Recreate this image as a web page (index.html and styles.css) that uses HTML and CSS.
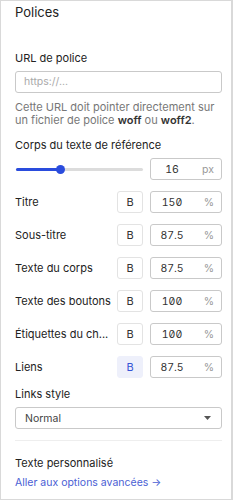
FILE: index.html
```html
<!DOCTYPE html>
<html>
<head>
    <meta charset="utf-8">
    <title>Polices</title>
    <link rel="stylesheet" href="styles.css">
</head>
<body>
    <div class="panel">
        <h2>Polices</h2>

        <div class="field url-field">
            <div class="label">URL de police</div>
            <div class="text-input">https://...</div>
            <div class="help">Cette URL doit pointer directement sur un fichier de police <b>woff</b> ou <b>woff2</b>.</div>
        </div>

        <div class="field base-field">
            <div class="label">Corps du texte de référence</div>
            <div class="row">
                <div class="slider">
                    <div class="track"></div>
                    <div class="fill"></div>
                    <div class="thumb"></div>
                </div>
                <div class="value"><span class="num">16</span><span class="unit">px</span></div>
            </div>
        </div>

        <div class="row size-row">
            <div class="row-label">Titre</div>
            <div class="bold-btn">B</div>
            <div class="value"><span class="num">150</span><span class="unit">%</span></div>
        </div>
        <div class="row size-row">
            <div class="row-label">Sous-titre</div>
            <div class="bold-btn">B</div>
            <div class="value"><span class="num">87.5</span><span class="unit">%</span></div>
        </div>
        <div class="row size-row">
            <div class="row-label">Texte du corps</div>
            <div class="bold-btn">B</div>
            <div class="value"><span class="num">87.5</span><span class="unit">%</span></div>
        </div>
        <div class="row size-row">
            <div class="row-label">Texte des boutons</div>
            <div class="bold-btn">B</div>
            <div class="value"><span class="num">100</span><span class="unit">%</span></div>
        </div>
        <div class="row size-row">
            <div class="row-label">Étiquettes du ch...</div>
            <div class="bold-btn">B</div>
            <div class="value"><span class="num">100</span><span class="unit">%</span></div>
        </div>
        <div class="row size-row">
            <div class="row-label">Liens</div>
            <div class="bold-btn active">B</div>
            <div class="value"><span class="num">87.5</span><span class="unit">%</span></div>
        </div>

        <div class="field links-field">
            <div class="label">Links style</div>
            <div class="select">
                <span>Normal</span>
                <svg width="7" height="4" viewBox="0 0 7 4"><path d="M0 0h7L3.5 4z" fill="#555"/></svg>
            </div>
        </div>

        <hr class="divider">

        <div class="label custom">Texte personnalisé</div>
        <a class="advanced" href="#">Aller aux options avancées →</a>
    </div>
</body>
</html>
```

FILE: styles.css
```css
html, body {
    margin: 0;
    padding: 0;
}

body {
    font-family: Inter, "Noto Sans", sans-serif;
    color: #222;
    background: #fff;
}

.panel {
    box-sizing: border-box;
    width: 233px;
    height: 500px;
    border: 1px solid #d9d9d9;
    border-right-width: 2px;
    padding: 3px 9px 0 14px;
    overflow: hidden;
}

h2 {
    margin: 0;
    font-size: 13px;
    font-weight: 400;
    line-height: 16px;
    color: #222;
}

.label {
    font-size: 11px;
    line-height: 14px;
    color: #222;
    margin-bottom: 6px;
}

.url-field .label {
    margin-top: 31px;
}

.base-field .label {
    margin-top: 11px;
}

.links-field .label {
    margin-top: 9px;
}

.text-input {
    box-sizing: border-box;
    height: 22px;
    border: 1px solid #c9c9c9;
    border-radius: 3px;
    padding-left: 8px;
    font-size: 10.5px;
    line-height: 20px;
    color: #aaa;
}

.help {
    margin-top: 8px;
    font-size: 11px;
    line-height: 13px;
    color: #777;
}

.help b {
    color: #333;
    font-weight: 600;
    line-height: 13px;
}

.row {
    display: flex;
    align-items: center;
    height: 22px;
}

.slider {
    position: relative;
    flex: 1;
    height: 22px;
    margin: 0 7px 0 1px;
}

.slider .track {
    position: absolute;
    left: 0;
    right: 0;
    top: 10px;
    height: 3px;
    border-radius: 2px;
    background: #dcdcdc;
}

.slider .fill {
    position: absolute;
    left: 0;
    width: 45px;
    top: 10px;
    height: 3px;
    border-radius: 2px;
    background: #2a4cdd;
}

.slider .thumb {
    position: absolute;
    left: 40px;
    top: 7px;
    width: 9px;
    height: 9px;
    border-radius: 50%;
    background: #2a4cdd;
}

.value {
    box-sizing: border-box;
    display: flex;
    align-items: center;
    width: 72px;
    height: 22px;
    border: 1px solid #c9c9c9;
    border-radius: 3px;
    font-size: 10.5px;
    font-feature-settings: "zero" 1, "tnum" 1;
}

.value .num {
    width: 42px;
    text-align: center;
    color: #333;
}

.value .unit {
    flex: 1;
    text-align: right;
    padding-right: 7px;
    color: #999;
}

.size-row {
    margin-top: 11px;
}

.row-label {
    flex: 1;
    min-width: 0;
    font-size: 11px;
    color: #222;
    white-space: nowrap;
    padding-right: 6px;
}

.bold-btn {
    box-sizing: border-box;
    width: 26px;
    height: 22px;
    margin-right: 7px;
    border: 1px solid #e3e3e3;
    border-radius: 3px;
    text-align: center;
    font-size: 11px;
    line-height: 20px;
    color: #333;
}

.bold-btn.active {
    background: #eef0fb;
    border-color: #eef0fb;
    color: #3655d6;
}

.select {
    box-sizing: border-box;
    display: flex;
    align-items: center;
    justify-content: space-between;
    height: 22px;
    border: 1px solid #c9c9c9;
    border-radius: 3px;
    padding: 0 10px 0 9px;
    font-size: 10.5px;
    color: #444;
}

.divider {
    margin: 11px 0 0 0;
    border: 0;
    border-top: 1px solid #eee;
}

.label.custom {
    margin-top: 15px;
    margin-bottom: 0;
}

.advanced {
    display: block;
    margin-top: 6px;
    font-size: 10.5px;
    line-height: 14px;
    color: #4a60d4;
    text-decoration: none;
}
```
